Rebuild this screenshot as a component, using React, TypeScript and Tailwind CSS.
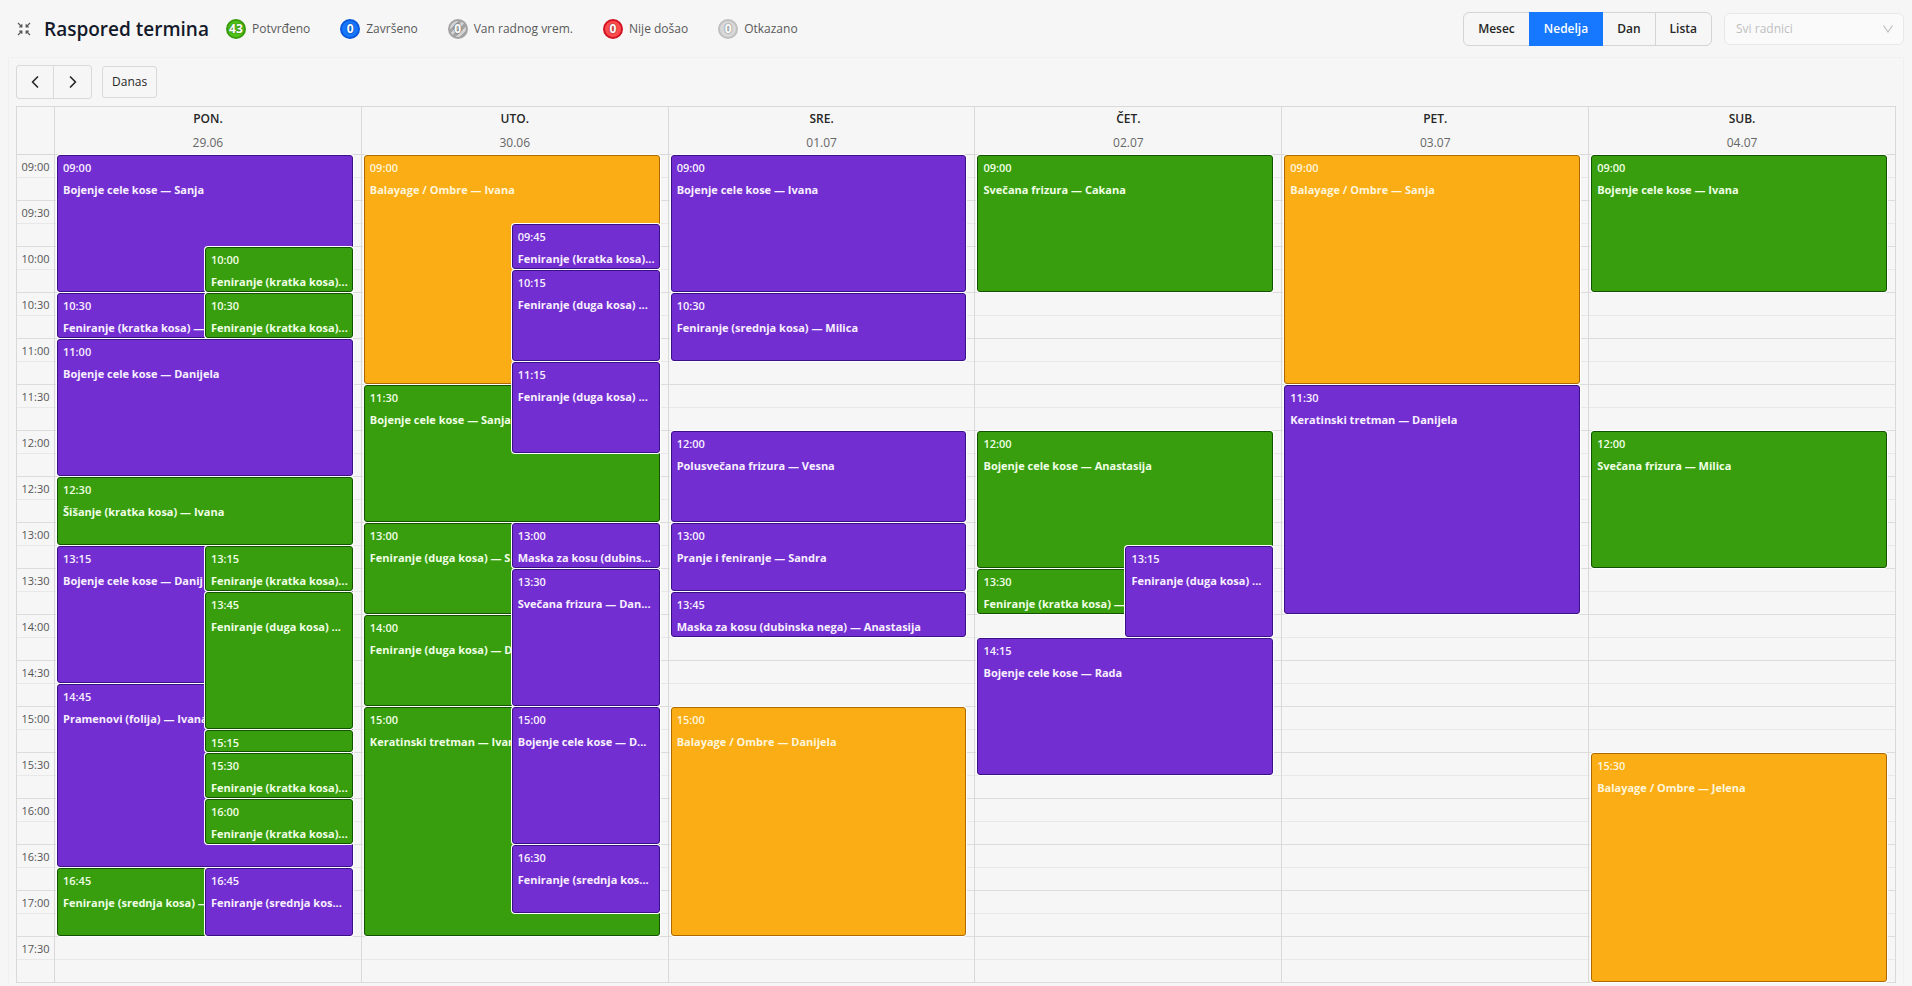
import { LuChevronLeft } from 'react-icons/lu';

type Tone = 'purple' | 'green' | 'orange';
type Event = { start: string; end: string; title: string; tone: Tone; right?: boolean };
type Day = { name: string; date: string; events: Event[] };

const ev = (start: string, end: string, title: string, tone: Tone, right = false): Event => ({ start, end, title, tone, right });

const days: Day[] = [
  {
    name: 'PON.',
    date: '29.06',
    events: [
      ev('09:00', '10:30', 'Bojenje cele kose — Sanja', 'purple'),
      ev('10:30', '11:00', 'Feniranje (kratka kosa) —', 'purple'),
      ev('11:00', '12:30', 'Bojenje cele kose — Danijela', 'purple'),
      ev('12:30', '13:15', 'Šišanje (kratka kosa) — Ivana', 'green'),
      ev('13:15', '14:45', 'Bojenje cele kose — Danij', 'purple'),
      ev('14:45', '16:45', 'Pramenovi (folija) — Ivana', 'purple'),
      ev('16:45', '17:30', 'Feniranje (srednja kosa) —', 'green'),
      ev('10:00', '10:30', 'Feniranje (kratka kosa)...', 'green', true),
      ev('10:30', '11:00', 'Feniranje (kratka kosa)...', 'green', true),
      ev('13:15', '13:45', 'Feniranje (kratka kosa)...', 'green', true),
      ev('13:45', '15:15', 'Feniranje (duga kosa) ...', 'green', true),
      ev('15:15', '15:30', '', 'green', true),
      ev('15:30', '16:00', 'Feniranje (kratka kosa)...', 'green', true),
      ev('16:00', '16:30', 'Feniranje (kratka kosa)...', 'green', true),
      ev('16:45', '17:30', 'Feniranje (srednja kos...', 'purple', true),
    ],
  },
  {
    name: 'UTO.',
    date: '30.06',
    events: [
      ev('09:00', '11:30', 'Balayage / Ombre — Ivana', 'orange'),
      ev('11:30', '13:00', 'Bojenje cele kose — Sanja', 'green'),
      ev('13:00', '14:00', 'Feniranje (duga kosa) — S', 'green'),
      ev('14:00', '15:00', 'Feniranje (duga kosa) — D', 'green'),
      ev('15:00', '17:30', 'Keratinski tretman — Ivan', 'green'),
      ev('09:45', '10:15', 'Feniranje (kratka kosa)...', 'purple', true),
      ev('10:15', '11:15', 'Feniranje (duga kosa) ...', 'purple', true),
      ev('11:15', '12:15', 'Feniranje (duga kosa) ...', 'purple', true),
      ev('13:00', '13:30', 'Maska za kosu (dubins...', 'purple', true),
      ev('13:30', '15:00', 'Svečana frizura — Dan...', 'purple', true),
      ev('15:00', '16:30', 'Bojenje cele kose — D...', 'purple', true),
      ev('16:30', '17:15', 'Feniranje (srednja kos...', 'purple', true),
    ],
  },
  {
    name: 'SRE.',
    date: '01.07',
    events: [
      ev('09:00', '10:30', 'Bojenje cele kose — Ivana', 'purple'),
      ev('10:30', '11:15', 'Feniranje (srednja kosa) — Milica', 'purple'),
      ev('12:00', '13:00', 'Polusvečana frizura — Vesna', 'purple'),
      ev('13:00', '13:45', 'Pranje i feniranje — Sandra', 'purple'),
      ev('13:45', '14:15', 'Maska za kosu (dubinska nega) — Anastasija', 'purple'),
      ev('15:00', '17:30', 'Balayage / Ombre — Danijela', 'orange'),
    ],
  },
  {
    name: 'ČET.',
    date: '02.07',
    events: [
      ev('09:00', '10:30', 'Svečana frizura — Cakana', 'green'),
      ev('12:00', '13:30', 'Bojenje cele kose — Anastasija', 'green'),
      ev('13:30', '14:00', 'Feniranje (kratka kosa) —', 'green'),
      ev('14:15', '15:45', 'Bojenje cele kose — Rada', 'purple'),
      ev('13:15', '14:15', 'Feniranje (duga kosa) ...', 'purple', true),
    ],
  },
  {
    name: 'PET.',
    date: '03.07',
    events: [
      ev('09:00', '11:30', 'Balayage / Ombre — Sanja', 'orange'),
      ev('11:30', '14:00', 'Keratinski tretman — Danijela', 'purple'),
    ],
  },
  {
    name: 'SUB.',
    date: '04.07',
    events: [
      ev('09:00', '10:30', 'Bojenje cele kose — Ivana', 'green'),
      ev('12:00', '13:30', 'Svečana frizura — Milica', 'green'),
      ev('15:30', '18:00', 'Balayage / Ombre — Jelena', 'orange'),
    ],
  },
];

const SLOT = 23;
const DAY_START = 9 * 60;
const halfHours = Array.from({ length: 18 }, (_, i) => {
  const minutes = DAY_START + i * 30;
  return `${String(Math.floor(minutes / 60)).padStart(2, '0')}:${String(minutes % 60).padStart(2, '0')}`;
});

const offset = (time: string) => {
  const [h, m] = time.split(':').map(Number);
  return ((h * 60 + m - DAY_START) / 15) * SLOT;
};

const tones: Record<Tone, string> = {
  purple: 'border-[#391085] bg-[#722ed1] text-[#f9f0ff]',
  green: 'border-[#135200] bg-[#389e0d] text-[#f0ffe6]',
  orange: 'border-[#ad6800] bg-[#faad14] text-[#fff6dc]',
};

const statuses = [
  { count: 43, label: 'Potvrđeno', style: 'border-[#389e0d] bg-[#52c41a]' },
  { count: 0, label: 'Završeno', style: 'border-[#0958d9] bg-[#1677ff]' },
  {
    count: 0,
    label: 'Van radnog vrem.',
    style: 'border-[#a3a3a3] bg-[repeating-linear-gradient(135deg,#a6a6a6_0px,#a6a6a6_3px,#d4d4d4_3px,#d4d4d4_6px)]',
  },
  { count: 0, label: 'Nije došao', style: 'border-[#cf1322] bg-[#ff4d4f]' },
  { count: 0, label: 'Otkazano', style: 'border-[#bfbfbf] bg-[#d9d9d9]' },
];

function CompressIcon() {
  return (
    <svg viewBox="0 0 14 14" className="h-3.5 w-3.5" fill="none" stroke="#555" strokeWidth="1.2">
      <path d="M1 1 4.6 4.6M4.8 2.2v2.6H2.2M13 1 9.4 4.6M9.2 2.2v2.6h2.6M1 13 4.6 9.4M2.2 9.2h2.6v2.6M13 13 9.4 9.4M11.8 9.2H9.2v2.6" />
    </svg>
  );
}

function EventCard({ event }: { event: Event }) {
  const top = offset(event.start) + 1;
  return (
    <div
      className={`absolute right-0 overflow-hidden rounded-[3px] border pt-[3px] pl-[5px] shadow-[0_0_0_1px_#fff] ${event.right ? 'left-1/2' : 'left-0'} ${tones[event.tone]}`}
      style={{ top, height: offset(event.end) - top }}
    >
      <div className="text-[11px] leading-[17px] font-semibold">{event.start}</div>
      {event.title && <div className="mt-[5px] text-[11px] leading-[18px] font-bold whitespace-nowrap">{event.title}</div>}
    </div>
  );
}

function DayColumn({ day }: { day: Day }) {
  return (
    <section className="min-w-0 flex-1 border-r border-[#d9d9d9]" aria-label={`${day.name} ${day.date}`}>
      <header className="flex h-12 flex-col items-center border-b border-[#d9d9d9] text-[12px]">
        <span className="leading-6 font-semibold text-[#262626]">{day.name}</span>
        <span className="leading-6 text-[#666]">{day.date}</span>
      </header>
      <div className="relative">
        {halfHours.map((time) => (
          <div key={time} className="border-b border-[#dcdcdc]">
            <div className="h-[23px] border-b border-[#e8e8e8]" />
            <div className="h-[22px]" />
          </div>
        ))}
        <div className="absolute inset-y-0 -top-px right-2 left-0.5">
          {day.events.map((event) => (
            <EventCard key={`${event.start}-${event.right ? 'right' : 'left'}`} event={event} />
          ))}
        </div>
      </div>
    </section>
  );
}

export default function App() {
  return (
    <main className="min-h-screen bg-[#f6f6f6] px-2 font-['Open_Sans','Noto_Sans',sans-serif] text-[#262626]">
      <header className="flex h-[57px] items-center pl-[9px]">
        <button type="button" aria-label="Izađi iz celog ekrana" className="mr-[13px]">
          <CompressIcon />
        </button>
        <h1 className="mr-[17px] text-[19px] leading-7 font-semibold text-[#141a2a]">Raspored termina</h1>
        <ul className="flex items-center gap-[30px]">
          {statuses.map((s) => (
            <li key={s.label} className="flex items-center gap-1.5 text-[12px] text-[#595959]">
              <span
                className={`flex h-5 w-5 items-center justify-center rounded-full border-2 text-[12px] leading-4 font-bold text-white [text-shadow:0_0_2px_#00000099] ${s.style}`}
              >
                {s.count}
              </span>
              {s.label}
            </li>
          ))}
        </ul>
        <div className="ml-auto flex h-[34px] items-stretch rounded-md border border-[#d4d4d4] text-[12px] font-semibold">
          <button type="button" className="px-3.5">Mesec</button>
          <button type="button" className="-my-px bg-[#1677ff] px-[15px] text-white">Nedelja</button>
          <button type="button" className="border-r border-[#d4d4d4] px-3.5">Dan</button>
          <button type="button" className="px-3.5">Lista</button>
        </div>
        <div className="relative ml-3">
          <select aria-label="Radnik" className="h-8 w-[180px] appearance-none rounded-md border border-[#e8e8e8] bg-[#fafafa] px-[11px] text-[12px] text-[#bfbfbf]">
            <option>Svi radnici</option>
          </select>
          <svg viewBox="0 0 12 12" className="pointer-events-none absolute top-2.5 right-2.5 h-3 w-3" fill="none" stroke="#bfbfbf" strokeWidth="1.2">
            <path d="M1.5 2.5 6 9l4.5-6.5" />
          </svg>
        </div>
      </header>

      <div className="border-x border-t border-[#f0f0f0] px-[7px] pt-[7px]">
        <nav className="flex h-[34px] items-center gap-2.5">
          <div className="flex h-[34px] items-stretch rounded-[3px] border border-[#d9d9d9]">
            <button type="button" aria-label="Prethodna nedelja" className="flex w-[37px] items-center justify-center border-r border-[#d9d9d9]">
              <LuChevronLeft className="h-5 w-5" />
            </button>
            <button type="button" aria-label="Sledeća nedelja" className="flex w-[37px] items-center justify-center">
              <LuChevronLeft className="h-5 w-5 rotate-180" />
            </button>
          </div>
          <button type="button" className="h-8 rounded-[3px] border border-[#d9d9d9] px-[9px] text-[12px]">Danas</button>
        </nav>

        <div className="mt-[7px] flex border-t border-l border-[#d9d9d9]">
          <div className="w-[38px] shrink-0 border-r border-[#d9d9d9]">
            <div className="h-12 border-b border-[#d9d9d9]" />
            {halfHours.map((time) => (
              <div key={time} className="border-b border-[#dcdcdc] text-center text-[11px] text-[#555]">
                <div className="h-[23px] border-b border-[#e8e8e8] leading-[23px]">{time}</div>
                <div className="h-[22px]" />
              </div>
            ))}
          </div>
          {days.map((day) => (
            <DayColumn key={day.name} day={day} />
          ))}
        </div>
      </div>
    </main>
  );
}
